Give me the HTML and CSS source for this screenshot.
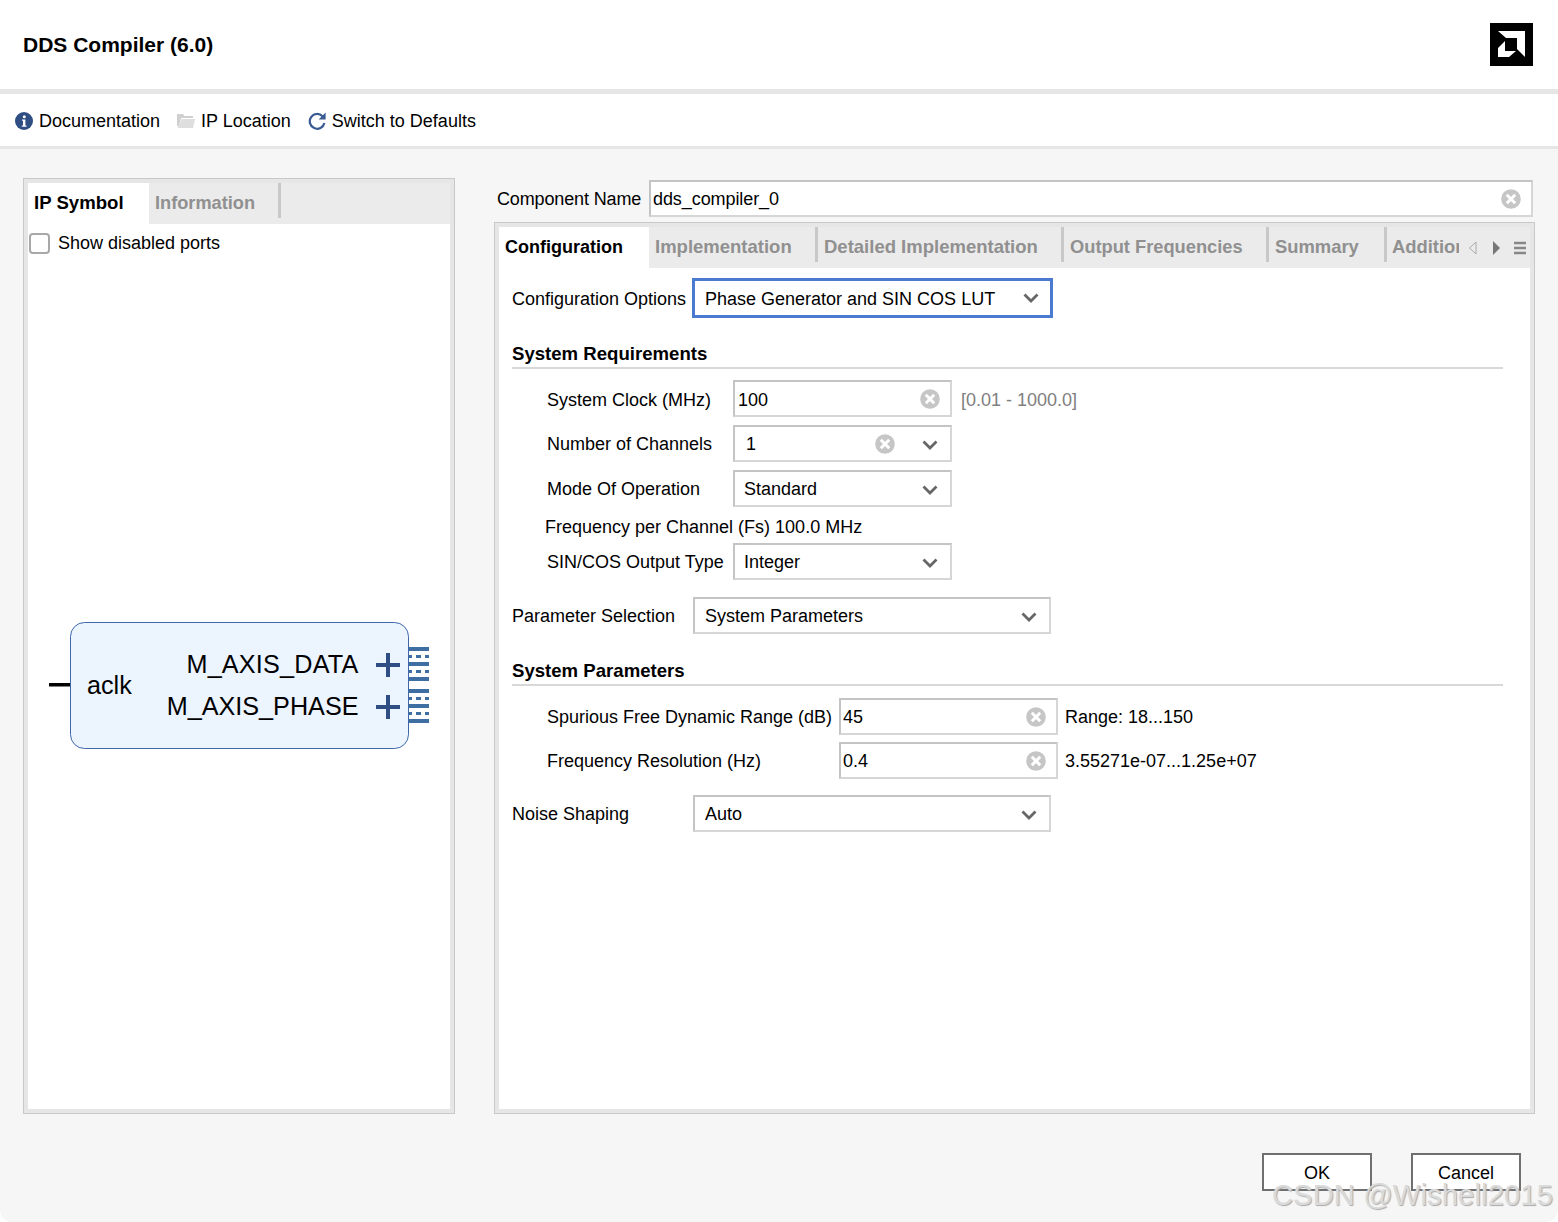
FILE: index.html
```html
<!DOCTYPE html>
<html lang="en">
<head>
<meta charset="utf-8">
<title>DDS Compiler (6.0)</title>
<link rel="stylesheet" href="styles.css">
</head>
<body>
<svg class="defs" width="0" height="0" aria-hidden="true">
  <symbol id="clear" viewBox="0 0 20 20"><circle cx="10" cy="10" r="9.8" fill="#c6c6c6"/><path d="M5.800 5.800l8.400 8.400M14.200 5.800l-8.400 8.400" stroke="#fff" stroke-width="3"/></symbol>
  <symbol id="chev" viewBox="0 0 16 10"><path d="M1.500 1.500L8 8l6.500-6.500" fill="none" stroke="#666" stroke-width="2.800"/></symbol>
</svg>
<div class="app">
  <header class="header">
    <h1 class="title">DDS Compiler (6.0)</h1>
    <svg class="logo" viewBox="0 0 43 43"><rect width="43" height="43" fill="#000"/><path d="M8 8H35V34L27 26V15H16Z" fill="#fff"/><path d="M15 18L8 25V34H19L26 28H15Z" fill="#fff"/></svg>
  </header>
  <nav class="toolbar">
    <span class="tool"><svg class="tool-icon" viewBox="0 0 18 18"><circle cx="9" cy="9" r="9" fill="#2f4e84"/><circle cx="9.300" cy="4.800" r="1.500" fill="#fff"/><path d="M7 7.500h3.400v6h1.100v1.200H6.800v-1.200h1.200V8.700H7z" fill="#fff"/></svg>Documentation</span>
    <span class="tool"><svg class="tool-icon" viewBox="0 0 18 18"><path d="M0 2h6l1.500 2H16v2H4L2 14H0z" fill="#d0d0d0"/><path d="M4.500 7H18l-2 9H0.500z" fill="#dedede"/></svg>IP Location</span>
    <span class="tool"><svg class="tool-icon" viewBox="0 0 18 18"><path d="M14.500 4.200A7.400 7.400 0 1 0 16.400 11" fill="none" stroke="#3a5a92" stroke-width="2.200"/><path d="M17.600 0.500V7.500H10.600z" fill="#3a5a92"/></svg>Switch to Defaults</span>
  </nav>
  <main class="main">
    <section class="panel left">
      <div class="tabs">
        <span class="tab active tab-sym">IP Symbol</span>
        <span class="tab tab-info">Information</span>
        <span class="sep"></span>
      </div>
      <label class="check"><span class="box"></span>Show disabled ports</label>
      <svg class="symbol" width="422" height="150" viewBox="0 0 422 150">
        <rect x="42.500" y="11.500" width="338" height="126" rx="14" fill="#ecf4fe" stroke="#3f67a8"/>
        <rect x="21" y="72" width="21" height="3.500" fill="#000"/>
        <text class="sym" x="59" y="83">aclk</text>
        <text class="sym sym-data" x="330.500" y="62" text-anchor="end">M_AXIS_DATA</text>
        <text class="sym" x="330.500" y="104" text-anchor="end">M_AXIS_PHASE</text>
        <path d="M348 54h24M360 42v24M348 96h24M360 84v24" stroke="#2f4e84" stroke-width="4"/>
        <path class="bus" d="M381 38h20M381 53h20M381 68h20M381 80h20M381 95h20M381 110h20"/>
        <path class="bus-dash" d="M381 45.500h3M388 45.500h5M397 45.500h4M381 60.500h3M388 60.500h5M397 60.500h4M381 87.500h3M388 87.500h5M397 87.500h4M381 102.500h3M388 102.500h5M397 102.500h4"/>
      </svg>
    </section>
    <section class="right">
      <div class="name-row">
        <span class="name-label">Component Name</span>
        <div class="input name-input"><span>dds_compiler_0</span><svg class="clear"><use href="#clear"/></svg></div>
      </div>
      <div class="panel config">
        <div class="tabs tabs-wide">
          <span class="tab active tab-conf">Configuration</span>
          <span class="tab tab-impl">Implementation</span><span class="sep"></span>
          <span class="tab tab-det">Detailed Implementation</span><span class="sep"></span>
          <span class="tab tab-out">Output Frequencies</span><span class="sep"></span>
          <span class="tab tab-sum">Summary</span><span class="sep"></span>
          <span class="tab tab-add">Additional</span>
          <svg class="nav-arrow" viewBox="0 0 9 14"><path d="M8 1L1.500 7 8 13z" fill="none" stroke="#aaa"/></svg>
          <svg class="nav-arrow next" viewBox="0 0 9 14"><path d="M1 0L8 7 1 14z" fill="#777"/></svg>
          <svg class="menu" viewBox="0 0 12 14"><path d="M0 2h12M0 7h12M0 12h12" stroke="#888" stroke-width="2.400"/></svg>
        </div>
        <div class="form">
          <div class="row row-config">
            <span class="lab-top">Configuration Options</span>
            <div class="input select focus"><span>Phase Generator and SIN COS LUT</span><svg class="chev"><use href="#chev"/></svg></div>
          </div>
          <h2 class="section sec-req">System Requirements</h2>
          <div class="fields">
            <div class="row r-clock"><span class="lab">System Clock (MHz)</span><div class="input field"><span>100</span><svg class="clear"><use href="#clear"/></svg></div><span class="hint">[0.01 - 1000.0]</span></div>
            <div class="row r-chan"><span class="lab">Number of Channels</span><div class="input field pad-num"><span>1</span><svg class="clear mid"><use href="#clear"/></svg><svg class="chev"><use href="#chev"/></svg></div></div>
            <div class="row r-mode"><span class="lab">Mode Of Operation</span><div class="input field pad"><span>Standard</span><svg class="chev"><use href="#chev"/></svg></div></div>
            <div class="freq">Frequency per Channel (Fs) 100.0 MHz</div>
            <div class="row"><span class="lab">SIN/COS Output Type</span><div class="input field pad"><span>Integer</span><svg class="chev"><use href="#chev"/></svg></div></div>
          </div>
          <div class="row r-param">
            <span class="lab-top">Parameter Selection</span>
            <div class="input select plain"><span>System Parameters</span><svg class="chev"><use href="#chev"/></svg></div>
          </div>
          <h2 class="section sec-sys">System Parameters</h2>
          <div class="fields">
            <div class="row r-sfdr"><span class="lab lab-wide">Spurious Free Dynamic Range (dB)</span><div class="input field tight"><span>45</span><svg class="clear"><use href="#clear"/></svg></div><span class="note">Range: 18...150</span></div>
            <div class="row"><span class="lab lab-wide">Frequency Resolution (Hz)</span><div class="input field tight"><span>0.4</span><svg class="clear"><use href="#clear"/></svg></div><span class="note">3.55271e-07...1.25e+07</span></div>
          </div>
          <div class="row r-noise">
            <span class="lab-top">Noise Shaping</span>
            <div class="input select plain"><span>Auto</span><svg class="chev"><use href="#chev"/></svg></div>
          </div>
        </div>
      </div>
    </section>
  </main>
  <footer class="footer">
    <button class="btn">OK</button>
    <button class="btn">Cancel</button>
  </footer>
  <div class="watermark">CSDN @Wishell2015</div>
</div>
</body>
</html>
```
FILE: styles.css
```css
* { box-sizing: border-box; }
html, body { margin: 0; height: 100%; background: #fff; }
body { font-family: "Liberation Sans", Arial, sans-serif; font-size: 18px; color: #000; overflow: hidden; }
.defs { position: absolute; }
.app { position: relative; width: 1558px; height: 1222px; display: flex; flex-direction: column; background: #f6f6f6; border-radius: 0 0 12px 12px; overflow: hidden; }

.header { height: 94px; flex: none; background: #fff; border-bottom: 5px solid #e6e6e6; display: flex; align-items: center; justify-content: space-between; padding: 0 25px 0 23px; }
.title { margin: 0; font-size: 21px; font-weight: bold; }
.logo { width: 43px; height: 43px; display: block; }

.toolbar { height: 55px; flex: none; background: #fff; border-bottom: 3px solid #e6e6e6; display: flex; align-items: center; padding: 2px 0 0 15px; gap: 17px; }
.tool { display: flex; align-items: center; gap: 6px; }
.tool-icon { width: 18px; height: 18px; flex: none; }

.main { flex: 1; min-height: 0; display: flex; padding: 29px 23px 0; gap: 39px; }
.panel { background: #fff; border: 1px solid #c8c8c8; box-shadow: inset 0 0 0 4px #e6e6e6; padding: 4px; }
.left { width: 432px; height: 936px; flex: none; }
.right { width: 1041px; flex: none; height: 936px; display: flex; flex-direction: column; }

.tabs { height: 41px; background: #ebebeb; display: flex; align-items: center; font-size: 18.4px; font-weight: bold; color: #909090; }
.tab { height: 41px; display: flex; align-items: center; flex: none; white-space: nowrap; padding-bottom: 2px; }
.tab.active { background: #fff; color: #000; }
.tab-sym { width: 121px; padding-left: 6px; font-size: 18.6px; }
.tab-info { padding-left: 6px; width: 129px; font-size: 18.2px; padding-bottom: 0; }
.sep { width: 3px; height: 35px; background: #c8c8c8; flex: none; align-self: flex-start; }

.check { display: flex; align-items: center; height: 38px; padding-left: 1px; gap: 8px; }
.box { width: 21px; height: 21px; border: 2px solid #a8a8a8; border-radius: 4px; background: #fff; }
.symbol { display: block; margin: 349px 0 0 0; }
.sym { font-size: 25.2px; fill: #000; }
.sym-data { letter-spacing: 0.2px; }
.bus { stroke: #3f6ea3; stroke-width: 4; }
.bus-dash { stroke: #3f6ea3; stroke-width: 3; }

.name-row { height: 37px; flex: none; margin-top: 2px; padding-left: 3px; display: flex; align-items: center; }
.name-label { flex: none; width: 152px; padding-top: 1px; letter-spacing: -0.14px; }
.input { display: flex; align-items: center; background: #fff; border: 2px solid #d6d6d6; border-color: #c4c4c4 #d6d6d6 #d6d6d6 #c4c4c4; height: 37px; position: relative; padding-left: 3px; }
.input span { padding-top: 1px; }
.name-input { width: 884px; padding-left: 2px; }
.name-input span { letter-spacing: -0.08px; }
.clear { width: 20px; height: 20px; position: absolute; right: 10px; top: 7px; }
.clear.mid { right: 55px; }
.chev { width: 16px; height: 10px; position: absolute; right: 12px; top: 13px; }

.config { flex: none; height: 892px; margin-top: 5px; }
.tabs-wide .tab-conf { width: 150px; padding: 0 0 0 6px; font-size: 18px; }
.tab-impl { width: 166px; padding-left: 6px; font-size: 18.5px; }
.tab-det { width: 243px; padding-left: 6px; font-size: 18.5px; }
.tab-out { width: 202px; padding-left: 6px; font-size: 18.3px; }
.tab-sum { width: 115px; padding-left: 6px; }
.tab-add { width: 72px; padding-left: 5px; overflow: hidden; }
.nav-arrow { width: 9px; height: 14px; flex: none; margin-left: 9px; }
.nav-arrow.next { margin-left: 15px; }
.menu { width: 12px; height: 14px; flex: none; margin-left: 13px; }

.form { padding: 10px 27px 0 13px; }
.row { display: flex; align-items: center; height: 37px; }
.row-config { height: 40px; }
.row-config .lab-top { padding-top: 2px; }
.row-config .input span { padding-top: 3px; }
.lab-top { width: 181px; flex: none; }
.select { width: 357px; padding-left: 9px; }
.focus { width: 361px; height: 40px; border: 3px solid #4a7bd0; margin-left: -1px; padding-left: 10px; }
.focus .chev { top: 12px; right: 11px; }
.plain { margin-left: 0; width: 358px; padding-left: 10px; }
.section { margin: 0; font-size: 18.6px; font-weight: bold; border-bottom: 2px solid #d8d8d8; height: 27px; line-height: 24px; }
.sec-req { margin-top: 24px; }
.sec-sys { margin-top: 25px; }
.fields { padding-left: 35px; }
.lab { width: 186px; flex: none; padding-top: 1px; }
.r-clock .lab { padding-top: 3px; }
.r-clock .input span { padding-top: 3px; }
.lab-wide { width: 292px; padding-top: 1px; }
.field { width: 219px; flex: none; }
.pad { padding-left: 9px; }
.pad-num { padding-left: 11px; }
.tight { padding-left: 2px; }
.hint { color: #808080; margin-left: 9px; padding-top: 3px; }
.note { margin-left: 7px; padding-top: 2px; }
.r-clock { margin-top: 11px; }
.r-chan { margin-top: 8px; }
.r-mode { margin-top: 8px; }
.freq { height: 36px; line-height: 40px; margin-left: -2px; }
.r-param { margin-top: 17px; }
.r-param .lab-top, .r-noise .lab-top { padding-top: 2px; }
.sec-sys + .fields { margin-top: 12px; }
.r-sfdr { margin-bottom: 7px; }
.r-noise { margin-top: 16px; }

.footer { height: 108px; flex: none; display: flex; justify-content: flex-end; gap: 39px; padding: 39px 37px 0 0; }
.btn { width: 110px; height: 38px; background: #fff; border: 2px solid #707070; font: inherit; color: #000; padding: 2px 0 0; }
.watermark { position: absolute; right: 5px; bottom: 9px; font-size: 29px; line-height: 36px; color: #dadada; text-shadow: 1px 1px 1px #aaa; letter-spacing: 0.2px; white-space: nowrap; }
```
